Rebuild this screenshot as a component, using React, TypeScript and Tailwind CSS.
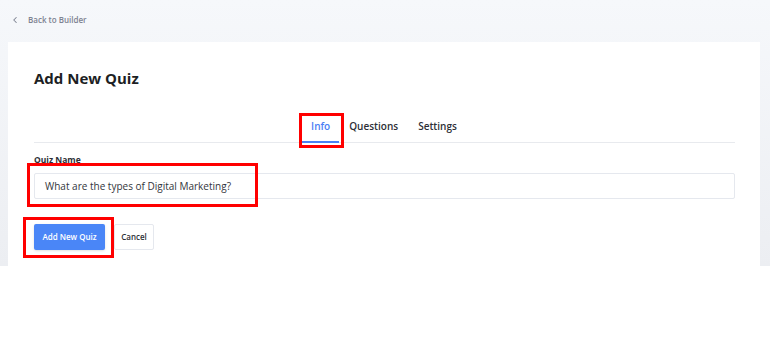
import { ChevronLeft } from 'lucide-react';

function Tab({ label, active }: { label: string; active?: boolean }) {
  return (
    <button
      type="button"
      className={
        active
          ? 'px-[9px] pt-[8px] pb-[7px] -mb-px border-b-2 border-[#4a80f5] text-[10px] font-semibold leading-4 text-[#4a80f5]'
          : 'px-[10px] pt-[8px] pb-[7px] -mb-px border-b-2 border-transparent text-[10px] font-semibold leading-4 text-[#2d2f36]'
      }
    >
      {label}
    </button>
  );
}

export default function App() {
  return (
    <div className="relative w-[770px] h-[350px] bg-white" style={{ fontFamily: '"Open Sans", "Noto Sans", sans-serif' }}>
      <div className="flex flex-col h-[266px] pl-2 pr-[10px] bg-gradient-to-b from-[#f6f8fb] to-[#eceef2]">
        <div className="flex items-center h-[42px] pb-[2px] pl-[2px] gap-[8px] text-[#7d8291]">
          <ChevronLeft size={10} strokeWidth={2.5} />
          <span className="text-[8px] font-semibold">Back to Builder</span>
        </div>

        <div className="flex-1 bg-white pl-[26px] pr-[25px] pt-[28px] pb-[15px]">
          <h1 className="text-[15px] font-bold leading-4 text-[#1d1f24]">Add New Quiz</h1>

          <div className="mt-[24px] flex justify-center border-b border-[#e8eaee]">
            <Tab label="Info" active />
            <Tab label="Questions" />
            <Tab label="Settings" />
          </div>

          <label className="block mt-[11px] text-[8.5px] font-bold leading-3 text-[#2d2f36]">Quiz Name</label>
          <div className="mt-[7px] h-[26px] flex items-center border border-[#e5e8ee] rounded-[2px] pl-[10px] text-[10px] text-[#33353b]">
            What are the types of Digital Marketing?
          </div>

          <div className="mt-[25px] flex gap-[9px]">
            <button type="button" className="h-[26px] w-[71px] rounded-[2px] bg-[#4a86f7] text-white text-[8px] font-semibold shadow-sm">
              Add New Quiz
            </button>
            <button type="button" className="h-[26px] w-[40px] rounded-[2px] border border-[#e5e8ee] bg-white text-[#2d2f36] text-[8px] font-semibold">
              Cancel
            </button>
          </div>
        </div>
      </div>

      {/* annotation boxes */}
      <div className="absolute left-[299px] top-[113px] w-[45px] h-[35px] border-[3px] border-[#ff0000]" />
      <div className="absolute left-[27px] top-[163px] w-[231px] h-[44px] border-[3px] border-[#ff0000]" />
      <div className="absolute left-[23px] top-[217px] w-[91px] h-[41px] border-[3px] border-[#ff0000]" />
    </div>
  );
}
